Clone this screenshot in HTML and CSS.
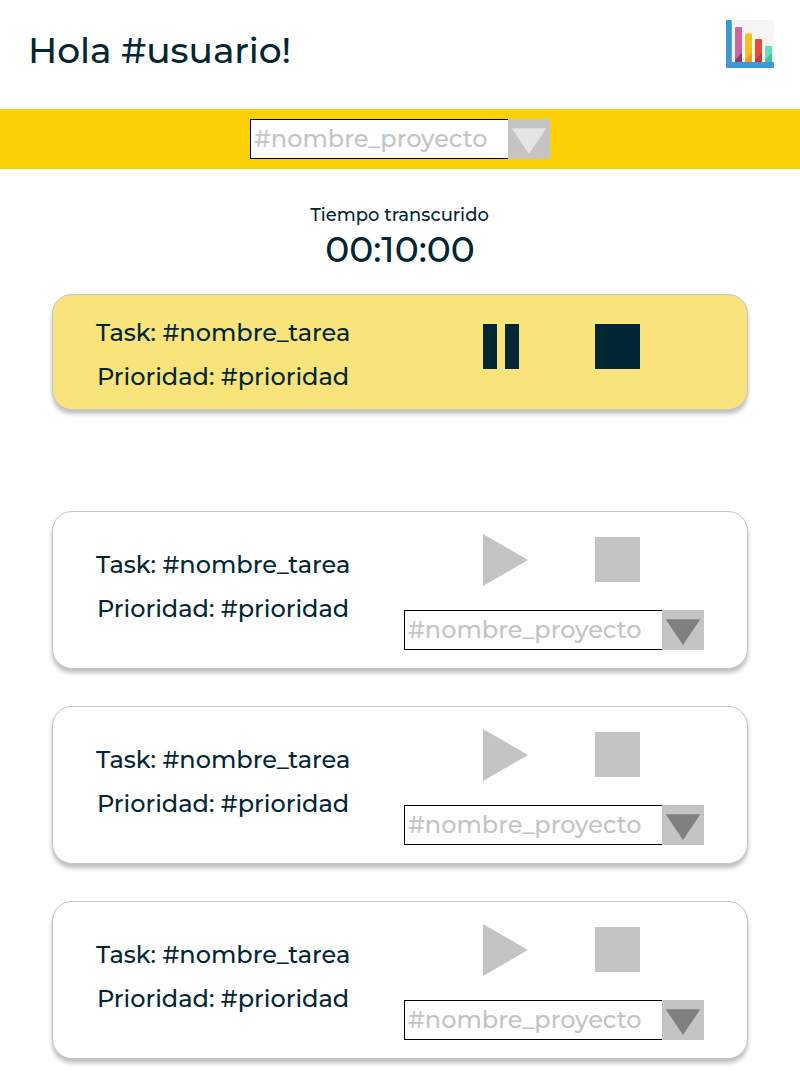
FILE: index.html
```
<!DOCTYPE html>
<html lang="es">
<head>
<meta charset="utf-8">
<title>Tareas</title>
<link rel="stylesheet" href="styles.css">
</head>
<body>
<header class="header">
  <h1 class="greeting">Hola #usuario!</h1>
  <svg class="chart" viewBox="0 0 48 48">
    <path fill="#f5f5f5" d="M5 0h43v43H5z"/>
    <path fill="#cc66a1" d="M9 42V8q0-1 1-1h5q1 0 1 1v34z"/>
    <path fill="#7f4171" d="M9 42v-2l7-7.500v9.500z"/>
    <path fill="#f3c41a" d="M19 42V14.500q0-1 1-1h5q1 0 1 1V42z"/>
    <path fill="#f59c22" d="M19 42v-2l7-7.500v9.500z"/>
    <path fill="#e64c3c" d="M29 42V20q0-1 1-1h5q1 0 1 1v22z"/>
    <path fill="#c03a2b" d="M29 42v-2l7-7.500v9.500z"/>
    <path fill="#67dfbb" d="M39 42V27q0-1 1-1h5q1 0 1 1v15z"/>
    <path fill="#45bf9d" d="M39 42v-2l7-7.500v9.500z"/>
    <path fill="#3d99d6" d="M0 1q0-1 1-1h3.800q1 0 1 1v41H47q1 0 1 1v4q0 1-1 1H1q-1 0-1-1z"/>
  </svg>
</header>

<div class="project-bar">
  <div class="select select-light">
    <span class="select-value">#nombre_proyecto</span>
    <svg class="select-arrow" viewBox="0 0 42 40"><path d="M3.700 9.200h34.600L21 35z"/></svg>
  </div>
</div>

<section class="timer">
  <div class="timer-label">Tiempo transcurido</div>
  <div class="timer-value">00:10:00</div>
</section>

<main class="tasks">
  <article class="card card-active">
    <div class="info">
      <div class="name">Task: #nombre_tarea</div>
      <div class="priority">Prioridad: #prioridad</div>
    </div>
    <div class="actions">
      <div class="controls">
        <svg class="control" viewBox="0 0 45 52"><path d="M0 3h14v45H0zM22 3h14v45H22z"/></svg>
        <svg class="control" viewBox="0 0 45 52"><path d="M0 3h45v45H0z"/></svg>
      </div>
    </div>
  </article>

  <article class="card">
    <div class="info">
      <div class="name">Task: #nombre_tarea</div>
      <div class="priority">Prioridad: #prioridad</div>
    </div>
    <div class="actions">
      <div class="controls">
        <svg class="control" viewBox="0 0 45 52"><path d="M0 0l45 26L0 52z"/></svg>
        <svg class="control" viewBox="0 0 45 52"><path d="M0 3h45v45H0z"/></svg>
      </div>
      <div class="select">
        <span class="select-value">#nombre_proyecto</span>
        <svg class="select-arrow" viewBox="0 0 42 40"><path d="M3.700 9.200h34.600L21 35z"/></svg>
      </div>
    </div>
  </article>

  <article class="card">
    <div class="info">
      <div class="name">Task: #nombre_tarea</div>
      <div class="priority">Prioridad: #prioridad</div>
    </div>
    <div class="actions">
      <div class="controls">
        <svg class="control" viewBox="0 0 45 52"><path d="M0 0l45 26L0 52z"/></svg>
        <svg class="control" viewBox="0 0 45 52"><path d="M0 3h45v45H0z"/></svg>
      </div>
      <div class="select">
        <span class="select-value">#nombre_proyecto</span>
        <svg class="select-arrow" viewBox="0 0 42 40"><path d="M3.700 9.200h34.600L21 35z"/></svg>
      </div>
    </div>
  </article>

  <article class="card">
    <div class="info">
      <div class="name">Task: #nombre_tarea</div>
      <div class="priority">Prioridad: #prioridad</div>
    </div>
    <div class="actions">
      <div class="controls">
        <svg class="control" viewBox="0 0 45 52"><path d="M0 0l45 26L0 52z"/></svg>
        <svg class="control" viewBox="0 0 45 52"><path d="M0 3h45v45H0z"/></svg>
      </div>
      <div class="select">
        <span class="select-value">#nombre_proyecto</span>
        <svg class="select-arrow" viewBox="0 0 42 40"><path d="M3.700 9.200h34.600L21 35z"/></svg>
      </div>
    </div>
  </article>
</main>
</body>
</html>
```

FILE: styles.css
```
* { box-sizing: border-box; }

body {
  margin: 0;
  height: 1080px;
  overflow: hidden;
  background: #fff;
  color: #022633;
  font-family: Montserrat, Inter, "Open Sans", sans-serif;
  font-size: 24px;
  font-weight: 500;
  white-space: nowrap;
}

svg { display: block; flex: none; }

.header {
  display: flex;
  justify-content: space-between;
  align-items: flex-start;
  height: 109px;
  padding: 20px 26px 0 28px;
}

.greeting {
  margin: 8px 0 0;
  font-size: 36px;
  font-weight: 500;
  line-height: 44px;
  letter-spacing: -0.06px;
}

.chart { width: 48px; height: 48px; }

.project-bar {
  display: flex;
  justify-content: center;
  height: 60px;
  padding-top: 10px;
  background: #fbd105;
}

.select {
  display: flex;
  width: 300px;
  height: 40px;
}

.select-value {
  flex: 1;
  padding-left: 3px;
  border: 1px solid #000;
  border-right: 0;
  background: #fcfffe;
  color: #c4c4c4;
  line-height: 38px;
}

.select-arrow {
  width: 42px;
  height: 40px;
  background: #c4c4c4;
  fill: #808080;
}

.select-light .select-arrow { fill: #e5e5e5; }

.timer {
  height: 125px;
  padding-top: 35px;
  text-align: center;
}

.timer-label {
  padding-right: 1px;
  font-size: 18px;
  line-height: 22px;
}

.timer-value {
  margin-top: 1px;
  font-size: 36px;
  line-height: 44px;
}

.tasks {
  display: flex;
  flex-direction: column;
  gap: 37px;
  padding: 0 52px;
}

.card {
  display: flex;
  flex: none;
  height: 158px;
  padding: 22px 43px 0;
  border: 1px solid #c4c4c4;
  border-radius: 20px;
  background: #fff;
  box-shadow: 0 4px 4px rgba(0, 0, 0, 0.25);
}

.card-active {
  height: 116px;
  margin-bottom: 64px;
  padding-top: 8px;
  background: #f9e37b;
}

.info {
  width: 308px;
  padding-top: 9px;
  line-height: 44px;
}

.card-active .info { padding-top: 8px; }

.priority { padding-left: 1px; }

.controls {
  display: flex;
  gap: 67px;
  margin-bottom: 24px;
  padding-left: 79px;
}

.card-active .controls { padding-top: 18px; }

.control {
  width: 45px;
  height: 52px;
  fill: #c4c4c4;
}

.card-active .control { fill: #022633; }
```
